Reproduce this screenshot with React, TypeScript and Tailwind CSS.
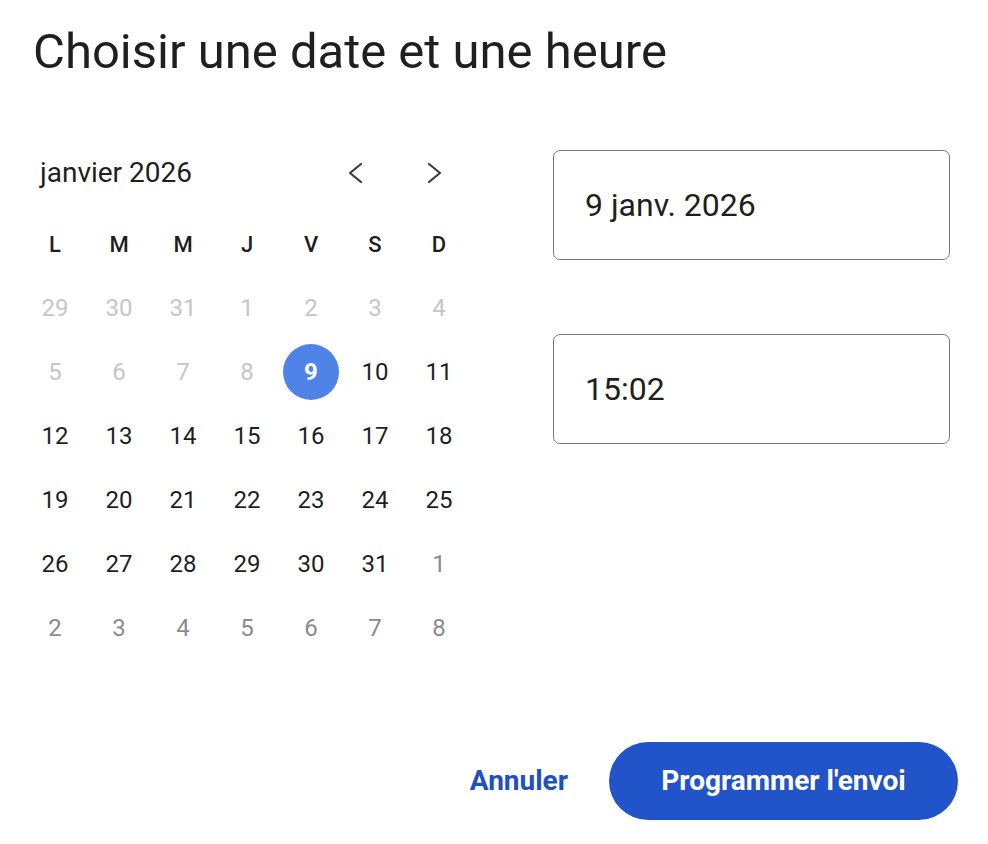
type Day = { n: number; kind: "past" | "cur" | "next" };

// Jan 2026, weeks start on Monday. Days before the 9th are disabled.
const weeks: Day[][] = (() => {
  const cells: Day[] = [];
  [29, 30, 31].forEach((n) => cells.push({ n, kind: "past" }));
  for (let n = 1; n <= 31; n++) cells.push({ n, kind: n < 9 ? "past" : "cur" });
  for (let n = 1; n <= 8; n++) cells.push({ n, kind: "next" });
  const out: Day[][] = [];
  for (let i = 0; i < cells.length; i += 7) out.push(cells.slice(i, i + 7));
  return out;
})();

const weekdays = ["L", "M", "M", "J", "V", "S", "D"];

function Chevron({ dir }: { dir: "left" | "right" }) {
  return (
    <svg width="18" height="22" viewBox="0 0 18 22" fill="none">
      <path
        d={dir === "left" ? "M15 2 L4 11 L15 20" : "M3 2 L14 11 L3 20"}
        stroke="#3c3c3c"
        strokeWidth="2.2"
        strokeLinecap="round"
        strokeLinejoin="round"
      />
    </svg>
  );
}

function DayCell({ day }: { day: Day }) {
  const selected = day.kind === "cur" && day.n === 9;
  if (selected) {
    return (
      <div className="flex h-16 w-16 items-center justify-center">
        <div className="flex h-14 w-14 items-center justify-center rounded-full bg-[#4f83e8] text-[24px] font-bold text-white">
          {day.n}
        </div>
      </div>
    );
  }
  const color =
    day.kind === "past"
      ? "text-[#c6c6c6]"
      : day.kind === "next"
        ? "text-[#8c8c8c]"
        : "text-[#1f1f1f]";
  return (
    <div className={`flex h-16 w-16 items-center justify-center text-[24px] ${color}`}>
      {day.n}
    </div>
  );
}

function Field({ value }: { value: string }) {
  return (
    <div className="flex h-[110px] w-[397px] items-center rounded-[7px] border border-[#7a7a7a] pl-[31px] text-[32px] text-[#1f1f1f]">
      {value}
    </div>
  );
}

export default function App() {
  return (
    <div className="h-[844px] w-[988px] bg-white font-['Roboto',sans-serif] text-[#1f1f1f]">
      <h1 className="pl-[33px] pt-[24px] text-[49px] leading-[56px]">
        Choisir une date et une heure
      </h1>

      <div className="mt-[61px] flex pl-[23px]">
        <div className="w-[448px]">
          <div className="flex h-16 items-center">
            <span className="pl-[17px] text-[28px]">janvier 2026</span>
            <div className="ml-auto flex items-center">
              <button className="mr-[62px] flex h-8 w-[18px] items-center justify-center">
                <Chevron dir="left" />
              </button>
              <button className="mr-[27px] flex h-8 w-[18px] items-center justify-center">
                <Chevron dir="right" />
              </button>
            </div>
          </div>

          <div className="mt-[7px] grid grid-cols-7">
            {weekdays.map((w, i) => (
              <div
                key={i}
                className="flex h-16 w-16 items-center justify-center text-[22px] font-medium"
              >
                {w}
              </div>
            ))}
          </div>
          {weeks.map((wk, i) => (
            <div key={i} className="grid grid-cols-7">
              {wk.map((d, j) => (
                <DayCell key={j} day={d} />
              ))}
            </div>
          ))}
        </div>

        <div className="ml-[82px] mt-[9px] flex flex-col gap-[74px]">
          <Field value="9 janv. 2026" />
          <Field value="15:02" />
        </div>
      </div>

      <div className="mt-[82px] flex items-center justify-end pr-[30px]">
        <button className="text-[28px] font-bold text-[#1e50c4]">Annuler</button>
        <button className="ml-[41px] flex h-[78px] w-[349px] items-center justify-center rounded-full bg-[#2254c9] text-[28px] font-bold text-white">
          Programmer l'envoi
        </button>
      </div>
    </div>
  );
}
